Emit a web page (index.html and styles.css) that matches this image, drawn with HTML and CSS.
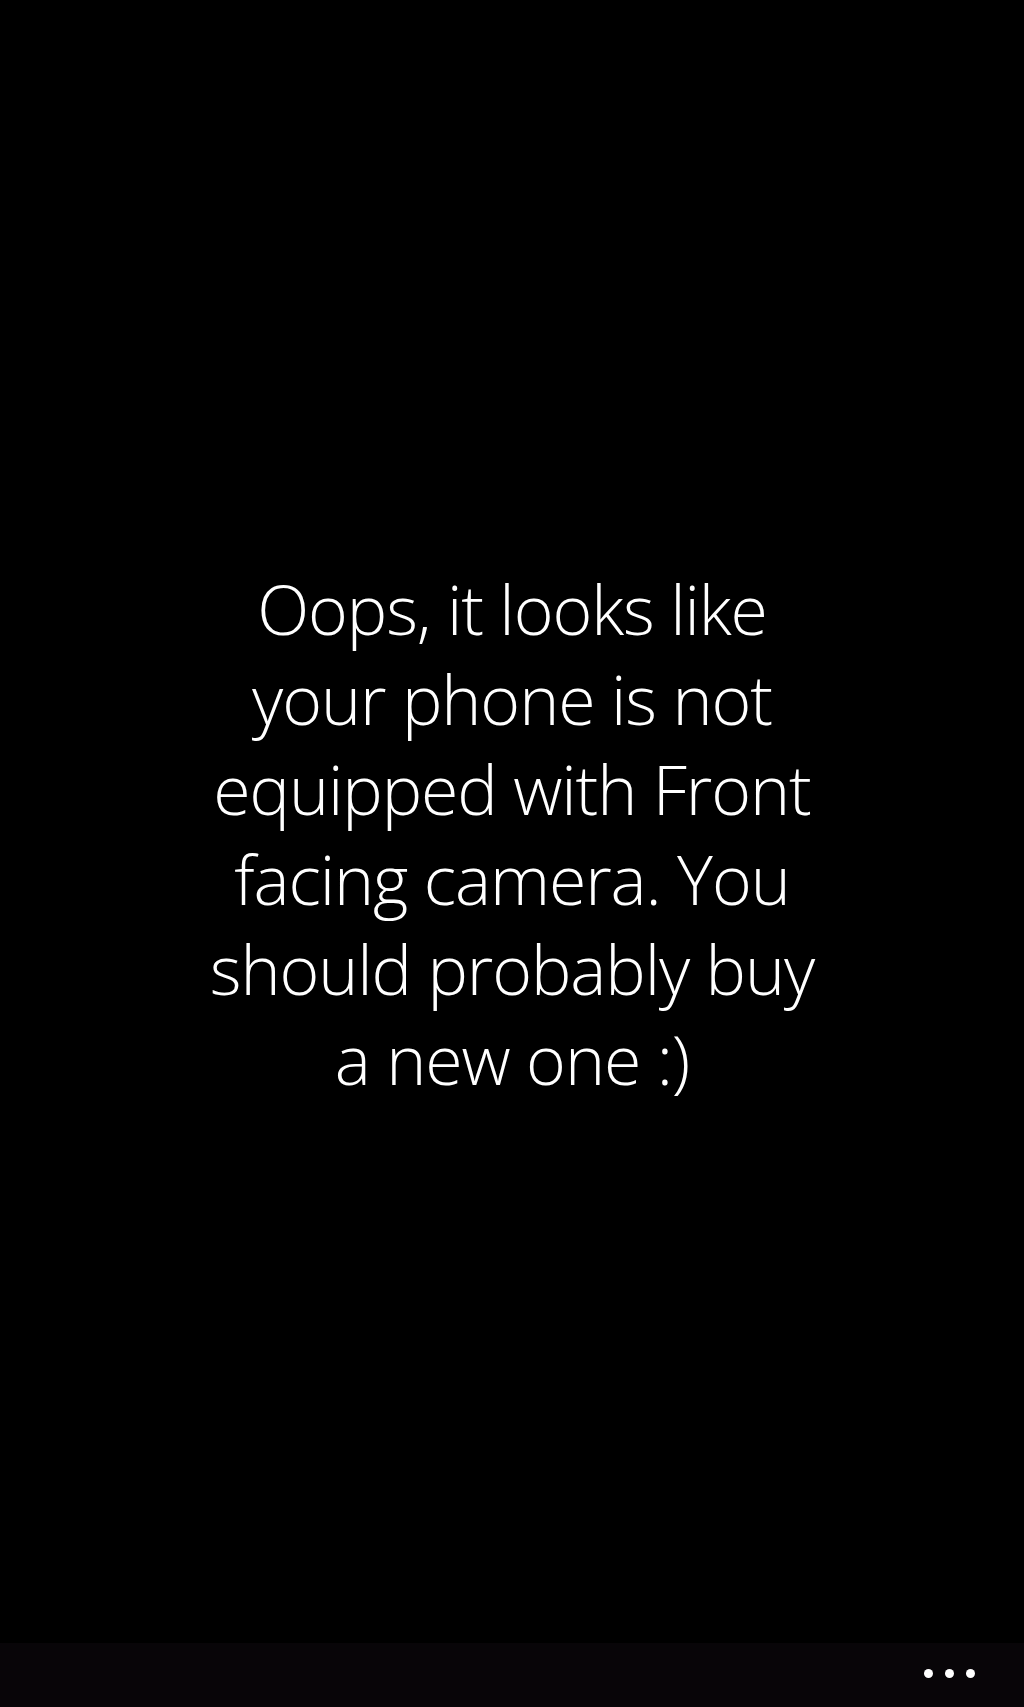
FILE: index.html
```html
<!DOCTYPE html>
<html lang="en">
<head>
<meta charset="utf-8">
<title>Front camera missing</title>
<link rel="stylesheet" href="styles.css">
</head>
<body>
<div class="screen">
  <main class="content">
    <p class="message">Oops, it looks like<br>your phone is not<br>equipped with Front<br>facing camera. You<br>should probably buy<br>a new one :)</p>
  </main>
  <footer class="appbar">
    <div class="more" aria-label="more">
      <span class="dot"></span><span class="dot"></span><span class="dot"></span>
    </div>
  </footer>
</div>
</body>
</html>
```
FILE: styles.css
```css
html, body {
  margin: 0;
  padding: 0;
  background: #000;
}
.screen {
  width: 1024px;
  height: 1707px;
  display: flex;
  flex-direction: column;
  background: #000;
}
.content {
  flex: 1;
  display: flex;
  align-items: center;
  justify-content: center;
  padding-top: 25px;
}
.message {
  margin: 0;
  color: #fff;
  font-family: "Open Sans", "Noto Sans", sans-serif;
  font-weight: 300;
  font-size: 68px;
  line-height: 90px;
  letter-spacing: -1.1px;
  text-align: center;
  white-space: nowrap;
}
.appbar {
  height: 64px;
  background: #080508;
  display: flex;
  justify-content: flex-end;
  align-items: flex-start;
}
.more {
  display: flex;
  gap: 12px;
  padding: 26px 49px 0 0;
}
.dot {
  width: 9px;
  height: 9px;
  border-radius: 50%;
  background: #fff;
}
```
